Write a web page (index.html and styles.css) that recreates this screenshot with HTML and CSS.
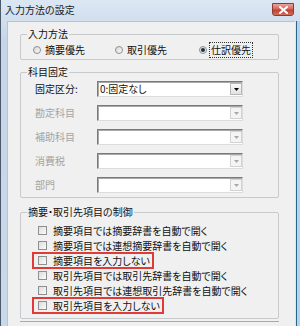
FILE: index.html
```html
<!DOCTYPE html>
<html lang="ja">
<head>
<meta charset="utf-8">
<title>入力方法の設定</title>
<link rel="stylesheet" href="styles.css">
</head>
<body>
<div class="window">
  <div class="titlebar">
    <span class="title">入力方法の設定</span>
    <span class="close"><svg width="9" height="8" viewBox="0 0 9 8"><path d="M1 1 L8 7 M8 1 L1 7" stroke="#fff" stroke-width="2" stroke-linecap="square"/></svg></span>
  </div>
  <div class="frame">
    <div class="content">
      <fieldset class="grp g1">
        <legend>入力方法</legend>
        <div class="radios">
          <label class="radio"><span class="rb"></span><span>摘要優先</span></label>
          <label class="radio"><span class="rb"></span><span>取引優先</span></label>
          <label class="radio"><span class="rb on"></span><span class="focus">仕訳優先</span></label>
        </div>
      </fieldset>
      <fieldset class="grp g2">
        <legend>科目固定</legend>
        <div class="field"><span class="lbl">固定区分:</span><div class="sel"><span class="val">0:固定なし</span><span class="btn"><svg width="5" height="3" viewBox="0 0 5 3"><path d="M0 0 H5 L2.5 3 Z" fill="#000"/></svg></span></div></div>
        <div class="field off"><span class="lbl">勘定科目</span><div class="sel"><span class="val"></span><span class="btn"><svg width="5" height="3" viewBox="0 0 5 3"><path d="M0 0 H5 L2.5 3 Z" fill="#a8a8a8"/></svg></span></div></div>
        <div class="field off"><span class="lbl">補助科目</span><div class="sel"><span class="val"></span><span class="btn"><svg width="5" height="3" viewBox="0 0 5 3"><path d="M0 0 H5 L2.5 3 Z" fill="#a8a8a8"/></svg></span></div></div>
        <div class="field off"><span class="lbl">消費税</span><div class="sel"><span class="val"></span><span class="btn"><svg width="5" height="3" viewBox="0 0 5 3"><path d="M0 0 H5 L2.5 3 Z" fill="#a8a8a8"/></svg></span></div></div>
        <div class="field off"><span class="lbl">部門</span><div class="sel"><span class="val"></span><span class="btn"><svg width="5" height="3" viewBox="0 0 5 3"><path d="M0 0 H5 L2.5 3 Z" fill="#a8a8a8"/></svg></span></div></div>
      </fieldset>
      <fieldset class="grp g3">
        <legend>摘要・取引先項目の制御</legend>
        <div class="chk"><span class="cb"></span><span>摘要項目では摘要辞書を自動で開く</span></div>
        <div class="chk"><span class="cb"></span><span>摘要項目では連想摘要辞書を自動で開く</span></div>
        <div class="chk mark"><span class="cb"></span><span>摘要項目を入力しない</span></div>
        <div class="chk"><span class="cb"></span><span>取引先項目では取引先辞書を自動で開く</span></div>
        <div class="chk"><span class="cb"></span><span>取引先項目では連想取引先辞書を自動で開く</span></div>
        <div class="chk mark"><span class="cb"></span><span>取引先項目を入力しない</span></div>
      </fieldset>
      <div class="next"></div>
    </div>
    <div class="rframe"></div>
  </div>
</div>
</body>
</html>
```
FILE: styles.css
```css
html, body {
  margin: 0;
  padding: 0;
  background: #f0f0f0;
}
.window {
  width: 300px;
  height: 326px;
  box-sizing: border-box;
  display: flex;
  flex-direction: column;
  border-left: 1px solid #4b5a6b;
  background: linear-gradient(#dce7f3, #c6d6e8 40px, #c9d9ea);
  overflow: hidden;
  font: 10px/12px "Noto Sans CJK JP", sans-serif;
  font-feature-settings: "palt";
  color: #111;
}
.titlebar {
  height: 21px;
  flex: none;
  display: flex;
  align-items: center;
  justify-content: space-between;
  padding: 0 6px 0 4px;
}
.title {
  font-size: 10px;
  color: #1a1a1a;
  margin-top: -1px;
}
.close {
  width: 22px;
  height: 13px;
  margin-top: -2px;
  box-sizing: border-box;
  border: 1px solid #8c3a34;
  border-radius: 0 0 3px 3px;
  background: linear-gradient(#e8a69b, #d6665a 45%, #c2402f 55%, #d2705c);
  display: flex;
  align-items: center;
  justify-content: center;
}
.frame {
  flex: 1;
  display: flex;
  padding-left: 6px;
}
.content {
  flex: 1;
  background: #f0f0f0;
  border-left: 1px solid #b4c4d4;
  border-top: 1px solid #b4c4d4;
  padding: 6px 16px 0 12px;
}
.rframe {
  width: 5px;
  flex: none;
  background: linear-gradient(to right, #dbe7f2 0 1px, #27668f 1px 2px, #b6d3ea 2px);
}
.grp {
  margin: 0;
  border: 1px solid #c6cacd;
  border-radius: 2px;
  min-width: 0;
}
.grp legend {
  padding: 0 1px;
  margin-left: 6px;
  line-height: 12px;
  color: #111;
}
.g1 { padding: 3px 0 2px 0; }
.g2 { padding: 3px 0 4px 0; margin-top: 6px; display: flex; flex-direction: column; gap: 8px; }
.g3 { padding: 5px 0 5px 0; margin-top: 8px; }

.radios {
  display: grid;
  grid-template-columns: 82px 84px auto;
  padding-left: 12px;
}
.radio {
  display: flex;
  align-items: center;
  gap: 4px;
  height: 14px;
}
.rb {
  width: 8px;
  height: 8px;
  box-sizing: border-box;
  border: 1px solid #8e8f8f;
  border-radius: 50%;
  background: linear-gradient(135deg, #d8d8d8, #fafafa);
  display: flex;
  align-items: center;
  justify-content: center;
}
.rb.on::after {
  content: "";
  width: 4px;
  height: 4px;
  border-radius: 50%;
  background: #1f2f3f;
}
.focus {
  outline: 1px dotted #333;
  outline-offset: 1px;
}

.field {
  display: flex;
  align-items: center;
  height: 16px;
}
.lbl {
  width: 76px;
  box-sizing: border-box;
  padding-left: 14px;
  color: #111;
}
.field.off .lbl { color: #a3a3a3; }
.sel {
  width: 146px;
  height: 16px;
  box-sizing: border-box;
  background: #fff;
  border: 1px solid;
  border-color: #7a7a7a #dcdcdc #dcdcdc #7a7a7a;
  box-shadow: inset 1px 1px 0 #a8a8a8;
  display: flex;
  align-items: center;
  justify-content: space-between;
}
.val {
  padding-left: 2px;
  color: #111;
}
.btn {
  width: 12px;
  height: 12px;
  box-sizing: border-box;
  border: 1px solid #b8b8b8;
  background: linear-gradient(#f8f8f8, #e2e2e2);
  display: flex;
  align-items: center;
  justify-content: center;
}
.field.off .btn { border-color: #d2d2d2; background: #f4f4f4; }

.chk {
  display: flex;
  align-items: center;
  gap: 6px;
  height: 15px;
  width: fit-content;
  margin-left: 12px;
  padding: 0 3px 0 5px;
}
.chk.mark {
  outline: 2px solid #e23a36;
  outline-offset: -1px;
}
.cb {
  width: 9px;
  height: 9px;
  box-sizing: border-box;
  border: 1px solid #8e8f8f;
  background: linear-gradient(135deg, #dcdcdc, #fbfbfb);
}
.next {
  margin-top: 2px;
  height: 6px;
  border-top: 1px solid #a9a9a9;
}
```
